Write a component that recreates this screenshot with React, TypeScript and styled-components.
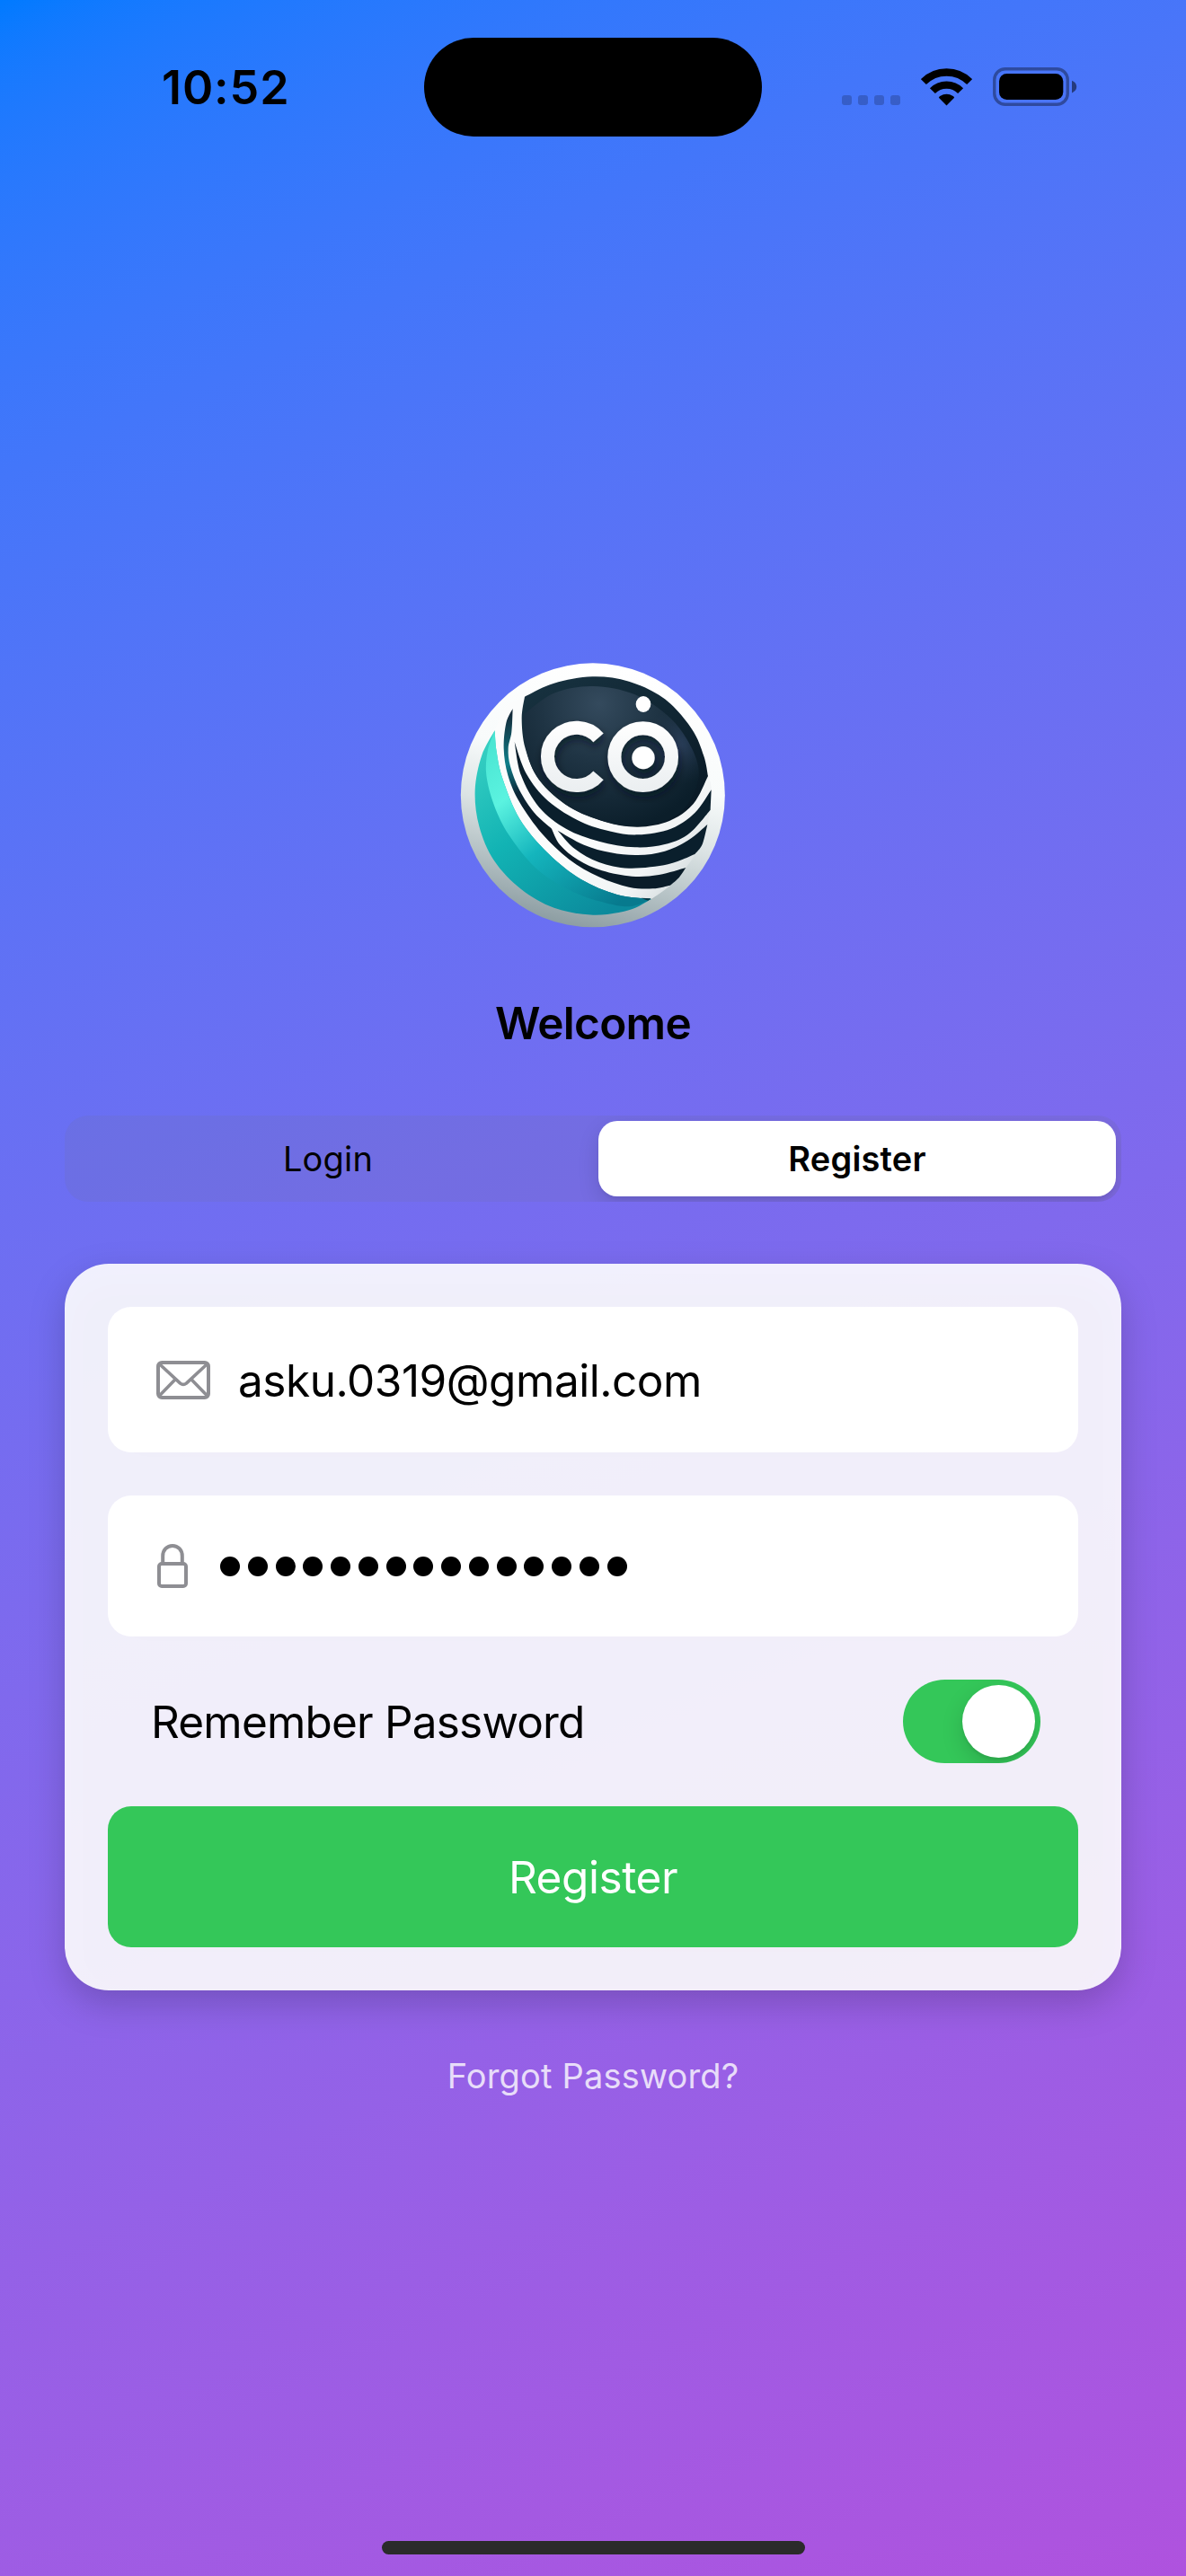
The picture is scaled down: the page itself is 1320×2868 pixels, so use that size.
import React, { useState } from "react";
import styled, { createGlobalStyle } from "styled-components";

const GlobalStyle = createGlobalStyle`
  *, *::before, *::after { box-sizing: border-box; }
  body { margin: 0; }
  button, input { font: inherit; border: 0; background: none; padding: 0; margin: 0; }
`;

const Screen = styled.div`
  width: 1320px;
  height: 2868px;
  overflow: hidden;
  display: flex;
  flex-direction: column;
  align-items: center;
  background: linear-gradient(155.28deg in oklab, #007aff, #af52de);
  color: #000;
  font-family: Inter, "Liberation Sans", sans-serif;
`;

const StatusBar = styled.header`
  width: 100%;
  height: 194px;
  flex: none;
  display: grid;
  grid-template-columns: 472px 376px 472px;
  align-items: center;
`;

const Clock = styled.time`
  padding: 2px 0 0 180px;
  font-size: 52px;
  font-weight: 600;
  line-height: 64px;
  letter-spacing: 0.9px;
`;

const Island = styled.div`
  height: 110px;
  border-radius: 55px;
  background: #000;
`;

const StatusIcons = styled.div`
  height: 44px;
  padding-left: 89px;
  display: flex;
  align-items: flex-start;
`;

const CellularDots = styled.div`
  display: flex;
  gap: 7px;
  margin: 31px 23px 0 0;
`;

const CellularDot = styled.span`
  width: 11px;
  height: 11px;
  border-radius: 3px;
  background: rgba(0, 0, 0, 0.2);
`;

const WifiIcon = styled.svg`
  width: 57px;
  height: 43px;
  margin-right: 23px;
`;

const BatteryIcon = styled.svg`
  width: 94px;
  height: 44px;
`;

const Content = styled.main`
  width: 1176px;
  display: flex;
  flex-direction: column;
  align-items: center;
  padding-top: 543px;
`;

const LogoImage = styled.svg`
  width: 296px;
  height: 296px;
`;

const Title = styled.h1`
  margin: 76px 0 72px;
  font-size: 49.5px;
  font-weight: 600;
  line-height: 61px;
  letter-spacing: -0.72px;
`;

const Segmented = styled.div`
  width: 100%;
  height: 96px;
  padding: 6px;
  display: grid;
  grid-template-columns: 1fr 576px;
  overflow: hidden;
  border-radius: 26px;
  background: rgba(118, 118, 128, 0.12);
`;

const Segment = styled.button<{ $active: boolean }>`
  padding-right: ${(p) => (p.$active ? 0 : 14)}px;
  border-radius: 21px;
  color: #000;
  font-size: 38px;
  font-weight: ${(p) => (p.$active ? 600 : 400)};
  letter-spacing: 0.17px;
  background: ${(p) => (p.$active ? "#fff" : "transparent")};
  box-shadow: ${(p) =>
    p.$active ? "0 9px 24px rgba(0,0,0,0.12), 0 3px 3px rgba(0,0,0,0.04)" : "none"};
`;

const Card = styled.form`
  width: 100%;
  margin-top: 69px;
  padding: 48px;
  display: flex;
  flex-direction: column;
  gap: 48px;
  border-radius: 49px;
  background: rgba(255, 255, 255, 0.9);
  filter: drop-shadow(0 15px 19px rgba(0, 0, 0, 0.2));
`;

const Field = styled.label<{ $height: number; $gap: number }>`
  height: ${(p) => p.$height}px;
  padding: 0 54px;
  display: flex;
  align-items: center;
  gap: ${(p) => p.$gap}px;
  border-radius: 26px;
  background: #fff;
`;

const FieldIcon = styled.svg`
  flex: none;
  display: block;
  fill: none;
  stroke: #8e8e93;
  stroke-width: 4;
  stroke-linejoin: round;
  stroke-linecap: round;
`;

const LockGlyph = styled(FieldIcon)`
  margin-left: 1px;
`;

const FieldText = styled.span`
  padding-top: 1px;
  font-size: 49.5px;
  line-height: 60px;
  letter-spacing: -0.47px;
`;

const Mask = styled.span`
  display: flex;
  gap: 8.75px;
  padding-top: 1px;
`;

const MaskDot = styled.span`
  width: 22px;
  height: 22px;
  border-radius: 50%;
  background: #000;
`;

const RememberRow = styled.div`
  height: 93px;
  padding: 0 42px 0 48px;
  display: flex;
  align-items: center;
  justify-content: space-between;
  font-size: 49.5px;
  letter-spacing: -0.81px;
`;

const Toggle = styled.button<{ $on: boolean }>`
  width: 153px;
  height: 93px;
  padding: 6px;
  display: flex;
  justify-content: ${(p) => (p.$on ? "flex-end" : "flex-start")};
  overflow: hidden;
  border-radius: 47px;
  background: ${(p) => (p.$on ? "#34c759" : "#e9e9ea")};
`;

const Knob = styled.span`
  width: 81px;
  height: 81px;
  border-radius: 50%;
  background: #fff;
  box-shadow: 0 9px 24px rgba(0, 0, 0, 0.15), 0 3px 3px rgba(0, 0, 0, 0.06);
`;

const Submit = styled.button`
  height: 157px;
  border-radius: 26px;
  background: #34c759;
  color: #fff;
  font-size: 49.5px;
  letter-spacing: -0.43px;
`;

const ForgotLink = styled.button`
  margin-top: 72px;
  color: rgba(255, 255, 255, 0.8);
  font-size: 38px;
  line-height: 46px;
  letter-spacing: 0.17px;
`;

const HomeIndicator = styled.div`
  width: 471px;
  height: 15px;
  margin: auto 0 24px;
  border-radius: 8px;
  background: #2b2b2b;
`;

type Point = [number, number];

/* Joins several edges into one closed outline; each edge is a smooth curve through its points. */
function outline(...edges: Point[][]): string {
  let d = "";
  edges.forEach((pts, e) => {
    if (e === 0) d += `M${pts[0][0]} ${pts[0][1]}`;
    for (let i = 0; i < pts.length - 1; i++) {
      const p0 = pts[Math.max(i - 1, 0)];
      const p1 = pts[i];
      const p2 = pts[i + 1];
      const p3 = pts[Math.min(i + 2, pts.length - 1)];
      const c1 = [p1[0] + (p2[0] - p0[0]) / 6, p1[1] + (p2[1] - p0[1]) / 6];
      const c2 = [p2[0] - (p3[0] - p1[0]) / 6, p2[1] - (p3[1] - p1[1]) / 6];
      d += `C${c1[0]} ${c1[1]} ${c2[0]} ${c2[1]} ${p2[0]} ${p2[1]}`;
    }
  });
  return d + "Z";
}

const dome = outline(
  [[252, 167], [350, 122], [478, 100], [600, 116], [720, 175], [810, 275], [850, 365], [864, 432]],
  [[864, 432], [815, 525], [735, 582], [630, 602], [520, 585], [400, 535], [300, 445], [254, 340], [242, 240], [252, 167]]
);

const domeSheen = outline([
  [250, 225], [350, 155], [480, 132], [620, 160], [740, 240], [810, 340], [833, 430], [800, 520],
  [735, 575], [630, 600], [520, 584], [400, 534], [300, 444], [256, 340], [250, 225],
]);

const bandOne = outline(
  [[218, 318], [258, 425], [330, 515], [440, 585], [540, 617], [630, 628], [740, 608], [820, 555], [875, 478]],
  [[875, 478], [872, 545]],
  [[872, 545], [800, 625], [720, 660], [620, 670], [500, 650], [390, 608], [300, 536], [240, 430], [218, 318]]
);

const bandTwo = outline(
  [[362, 614], [450, 662], [540, 688], [630, 696], [720, 683], [800, 645], [862, 594]],
  [[862, 594], [845, 660], [820, 693]],
  [[820, 693], [730, 727], [600, 740], [500, 720], [420, 676], [362, 614]]
);

const bandThree = outline(
  [[212, 207], [190, 255], [182, 340], [196, 430], [235, 520], [310, 625], [400, 710], [500, 769], [600, 803], [680, 808], [738, 797]],
  [[738, 797], [768, 770], [790, 738]],
  [[790, 738], [700, 762], [610, 767], [510, 748], [430, 712], [370, 662], [342, 608]],
  [[342, 608], [285, 556], [235, 480], [204, 400], [197, 340], [208, 285], [212, 207]]
);

const crescent = outline(
  [[152, 280], [108, 365], [86, 480], [100, 600], [150, 715], [240, 810], [350, 872], [480, 896], [600, 880], [674, 843]],
  [[674, 843], [560, 828], [440, 777], [330, 690], [235, 575], [178, 440], [158, 350], [152, 280]]
);

const crescentLight = outline(
  [[152, 280], [128, 350], [124, 430], [150, 530], [200, 630], [290, 740], [400, 812], [500, 850], [600, 868], [674, 843]],
  [[674, 843], [560, 828], [440, 777], [330, 690], [235, 575], [178, 440], [158, 350], [152, 280]]
);

/* White ground that shows between the dark bands as stripes. */
const stripes = outline(
  [[152, 280], [158, 350], [178, 440], [235, 575], [330, 690], [440, 777], [560, 828], [674, 843]],
  [[674, 843], [738, 797], [790, 738], [820, 693], [862, 594], [875, 478], [864, 432]],
  [[864, 432], [630, 300], [252, 167]],
  [[252, 167], [190, 200], [152, 280]]
);

function Logo() {
  return (
    <LogoImage viewBox="36 51 888 888" role="img" aria-label="CO">
      <defs>
        <linearGradient id="disc" x1="0.62" y1="0.02" x2="0.38" y2="1">
          <stop offset="0" stopColor="#ffffff" />
          <stop offset="0.38" stopColor="#f8fbfb" />
          <stop offset="0.6" stopColor="#dbe3e4" />
          <stop offset="0.8" stopColor="#b4c1c4" />
          <stop offset="1" stopColor="#8a9ba0" />
        </linearGradient>
        <linearGradient id="ground" gradientUnits="userSpaceOnUse" x1="520" y1="560" x2="800" y2="800">
          <stop offset="0" stopColor="#fbfcfc" />
          <stop offset="0.6" stopColor="#f1f4f5" />
          <stop offset="1" stopColor="#d3dbdd" />
        </linearGradient>
        <linearGradient id="rim" x1="0" y1="0" x2="0.7" y2="1">
          <stop offset="0" stopColor="#183341" />
          <stop offset="1" stopColor="#0a1a26" />
        </linearGradient>
        <radialGradient id="sheen" gradientUnits="userSpaceOnUse" cx="500" cy="190" r="430">
          <stop offset="0" stopColor="#344a5d" />
          <stop offset="0.45" stopColor="#1f3444" />
          <stop offset="1" stopColor="#0b1e2a" />
        </radialGradient>
        <radialGradient id="gleam" gradientUnits="userSpaceOnUse" cx="765" cy="330" r="130">
          <stop offset="0" stopColor="#3b5078" stopOpacity="0.6" />
          <stop offset="1" stopColor="#22354a" stopOpacity="0" />
        </radialGradient>
        <linearGradient id="tealDark" gradientUnits="userSpaceOnUse" x1="110" y1="330" x2="520" y2="890">
          <stop offset="0" stopColor="#36cfc2" />
          <stop offset="0.45" stopColor="#12b3b4" />
          <stop offset="1" stopColor="#0b8a9c" />
        </linearGradient>
        <linearGradient id="tealLight" gradientUnits="userSpaceOnUse" x1="140" y1="330" x2="560" y2="860">
          <stop offset="0" stopColor="#4be6d3" />
          <stop offset="0.25" stopColor="#5bf3e0" />
          <stop offset="0.55" stopColor="#14b5bd" />
          <stop offset="1" stopColor="#077a8e" />
        </linearGradient>
        <linearGradient id="bandTeal" gradientUnits="userSpaceOnUse" x1="190" y1="230" x2="290" y2="560">
          <stop offset="0" stopColor="#152b3a" />
          <stop offset="0.45" stopColor="#0f7f8a" />
          <stop offset="0.75" stopColor="#0c2838" />
          <stop offset="1" stopColor="#0a1c29" />
        </linearGradient>
        <linearGradient id="letters" gradientUnits="userSpaceOnUse" x1="0" y1="250" x2="0" y2="490">
          <stop offset="0" stopColor="#ffffff" />
          <stop offset="1" stopColor="#eaeef0" />
        </linearGradient>
        <filter id="letterShadow" x="-20%" y="-20%" width="150%" height="150%">
          <feDropShadow dx="4" dy="16" stdDeviation="14" floodColor="#04121c" floodOpacity="0.6" />
        </filter>
      </defs>
      <circle cx="479.5" cy="496" r="441" fill="url(#disc)" />
      <path d={stripes} fill="url(#ground)" />
      <path d={crescent} fill="url(#tealDark)" />
      <path d={crescentLight} fill="url(#tealLight)" />
      <path d="M640 839L674 841L664 848Z" fill="#0b3946" />
      <path d={bandThree} fill="url(#bandTeal)" />
      <path d={bandTwo} fill="#0a1f2c" />
      <path d={bandOne} fill="#0a1f2c" />
      <path d={dome} fill="url(#rim)" />
      <path d={domeSheen} fill="url(#sheen)" />
      <path d={domeSheen} fill="url(#gleam)" />
      <g filter="url(#letterShadow)">
        <path d="M498 304A96.5 96.5 0 1 0 498 430" fill="none" stroke="url(#letters)" strokeWidth="45" />
        <circle cx="647" cy="368" r="95.5" fill="none" stroke="url(#letters)" strokeWidth="45" />
        <circle cx="648" cy="371" r="38" fill="#fff" />
      </g>
      <ellipse cx="648" cy="192" rx="25" ry="27" fill="#fff" />
    </LogoImage>
  );
}

function Wifi() {
  return (
    <WifiIcon viewBox="0 0 57 43" fill="none" stroke="#000">
      <path d="M2.9 16.1A36.2 36.2 0 0 1 54.1 16.1" strokeWidth="8.4" />
      <path d="M12.9 26.1A22 22 0 0 1 44.1 26.1" strokeWidth="8.4" />
      <path
        d="M28.5 42.5L19.9 33.8Q20.2 32.8 21.2 32.1Q28.5 27.2 35.8 32.1Q36.8 32.8 37.1 33.8Z"
        fill="#000"
        stroke="none"
      />
    </WifiIcon>
  );
}

function Battery() {
  return (
    <BatteryIcon viewBox="0 0 94 44">
      <rect x="1.75" y="1.75" width="81.5" height="39.5" rx="12" fill="none" stroke="#000" strokeOpacity="0.36" strokeWidth="3.4" />
      <rect x="7" y="7" width="71.3" height="29" rx="8.5" />
      <path d="M88 14.8Q93.2 17 93.2 21.6Q93.2 26.2 88 28.4Z" fillOpacity="0.5" />
    </BatteryIcon>
  );
}

function EnvelopeIcon() {
  return (
    <FieldIcon width="60" height="43" viewBox="0 0 60 43">
      <rect x="2" y="2" width="56" height="39" rx="4.2" />
      <path d="M3.6 3.8L26.6 25.1Q30 27.8 33.4 25.1L56.4 3.8M21.3 20.4L3.6 38.8M38.7 20.4L56.4 38.8" strokeWidth="3.6" />
    </FieldIcon>
  );
}

function LockIcon() {
  return (
    <LockGlyph width="34" height="49" viewBox="0 0 34 49">
      <rect x="2" y="22" width="30" height="25" rx="3" />
      <path d="M6.2 22V13.5C6.2 6.8 10.8 2 17 2S27.8 6.8 27.8 13.5V22" />
    </LockGlyph>
  );
}

const MASK_LENGTH = 15;
const TABS = ["Login", "Register"];

export default function App() {
  const [tab, setTab] = useState("Register");
  const [remember, setRemember] = useState(true);

  return (
    <>
      <GlobalStyle />
      <Screen>
        <StatusBar>
          <Clock>10:52</Clock>
          <Island />
          <StatusIcons>
            <CellularDots>
              {[0, 1, 2, 3].map((n) => (
                <CellularDot key={n} />
              ))}
            </CellularDots>
            <Wifi />
            <Battery />
          </StatusIcons>
        </StatusBar>

        <Content>
          <Logo />
          <Title>Welcome</Title>

          <Segmented>
            {TABS.map((name) => (
              <Segment key={name} type="button" $active={name === tab} onClick={() => setTab(name)}>
                {name}
              </Segment>
            ))}
          </Segmented>

          <Card onSubmit={(e) => e.preventDefault()}>
            <Field $height={162} $gap={31}>
              <EnvelopeIcon />
              <FieldText>asku.0319@gmail.com</FieldText>
            </Field>
            <Field $height={157} $gap={36}>
              <LockIcon />
              <Mask>
                {Array.from({ length: MASK_LENGTH }, (_, n) => (
                  <MaskDot key={n} />
                ))}
              </Mask>
            </Field>
            <RememberRow>
              <span>Remember Password</span>
              <Toggle type="button" $on={remember} onClick={() => setRemember(!remember)}>
                <Knob />
              </Toggle>
            </RememberRow>
            <Submit type="submit">{tab}</Submit>
          </Card>

          <ForgotLink type="button">Forgot Password?</ForgotLink>
        </Content>

        <HomeIndicator />
      </Screen>
    </>
  );
}
